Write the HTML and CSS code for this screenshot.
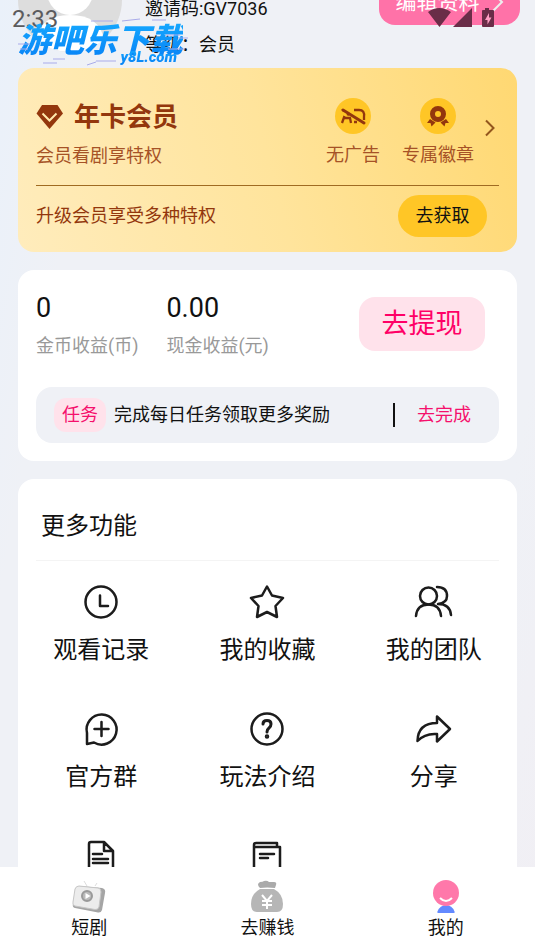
FILE: index.html
```html
<!DOCTYPE html>
<html lang="zh-CN">
<head>
<meta charset="utf-8">
<meta name="viewport" content="width=device-width, initial-scale=1">
<title>我的</title>
<link rel="stylesheet" href="styles.css">
</head>
<body>
<div class="status">
  <span>2:33</span>
  <svg class="status-icons" width="70" height="22" viewBox="0 0 70 22">
    <path d="M0 5Q11-3 23 5L11.500 20Z M25 20L44 1V20Z M57 1h4v2h4q1 0 1 1v15q0 1-1 1H55q-1 0-1-1V4q0-1 1-1h2Z"/>
    <path class="bolt" d="M61 6l-4 7h2.500v4.500l4-7H61Z"/>
  </svg>
</div>
<div class="watermark">
  <strong>游吧乐下载</strong>
  <em>y8L.com</em>
  <svg class="watermark-lines" width="175" height="56" viewBox="0 0 175 56">
    <path d="M73 1h22M104 1l18-2M0 24h12M2 29h8M148 15h14M160 18h10M150 29h17M35 39h12M25 43h14M78 41h20M69 45l9-3M134 0h14"/>
  </svg>
</div>
<main class="content">
  <header class="profile">
    <svg class="avatar" width="104" height="104" viewBox="0 0 104 104">
      <circle cx="52" cy="52" r="52" fill="#ddd"/>
      <circle cx="52" cy="44" r="23" fill="#fff"/>
      <path d="M18 92Q22 67 52 67T86 92Q70 104 52 104T18 92Z" fill="#fff"/>
    </svg>
    <div class="profile-info">
      <p>邀请码:GV7036</p>
      <p>等级：会员</p>
    </div>
    <button class="edit" type="button">编辑资料
      <svg width="12" height="20" viewBox="0 0 12 20"><path d="M1 1l9 9-9 9"/></svg>
    </button>
  </header>

  <section class="vip">
    <div class="vip-top">
      <div class="vip-name">
        <h1>
          <svg width="28" height="26" viewBox="0 0 28 26"><path d="M6 1h15.500L27 9.500 13.500 25 0.500 9.500Z" fill="#93370d"/><path d="M6.500 9.500L13.500 16.500 20.500 9.500" fill="none" stroke="#ffe9ad" stroke-width="2"/></svg>
          年卡会员
        </h1>
        <p>会员看剧享特权</p>
      </div>
      <div class="perk">
        <svg width="36" height="36" viewBox="0 0 36 36"><circle cx="18" cy="18" r="18" fill="#ffc626"/><g fill="none" stroke="#93370d" stroke-width="2.300"><path d="M7 25l2.500-7M9 20h6l1 5M19 12h5q6 0 5 7v3M19 24h3M12 16l2 1"/><path d="M8 12L29 25" stroke-width="3" stroke-linecap="round"/></g></svg>
        <span>无广告</span>
      </div>
      <div class="perk">
        <svg width="36" height="36" viewBox="0 0 36 36"><circle cx="18" cy="18" r="18" fill="#ffc626"/><path d="M10 21l-3 4 3.500 0 1 3.500 4-4ZM26 21l3 4-3.500 0-1 3.500-4-4Z" fill="#93370d"/><circle cx="18" cy="16" r="5.500" fill="none" stroke="#93370d" stroke-width="5"/></svg>
        <span>专属徽章</span>
      </div>
      <svg class="vip-arrow" width="10" height="18" viewBox="0 0 10 18"><path d="M1 1.500L8.500 9 1 16.500"/></svg>
    </div>
    <div class="vip-bottom">
      <span>升级会员享受多种特权</span>
      <button type="button">去获取</button>
    </div>
  </section>

  <section class="card income">
    <div class="income-row">
      <div><strong>0</strong><span>金币收益(币)</span></div>
      <div><strong>0.00</strong><span>现金收益(元)</span></div>
      <button type="button">去提现</button>
    </div>
    <div class="task">
      <span class="tag">任务</span>
      <span class="task-text">完成每日任务领取更多奖励</span>
      <a href="#task">去完成</a>
    </div>
  </section>

  <section class="card more">
    <h2>更多功能</h2>
    <div class="grid">
      <a href="#history"><svg width="36" height="36" viewBox="0 0 36 36"><circle cx="18" cy="18" r="15.500"/><path d="M17 11.500v10.500h8"/></svg><span>观看记录</span></a>
      <a href="#favorites"><svg width="36" height="36" viewBox="0 0 36 36"><path d="M18 2.500L23 11.500 34 14 26.500 22 28 33 18 28 8 33 9.500 22 2 14 13 11.500Z"/></svg><span>我的收藏</span></a>
      <a href="#team"><svg width="36" height="36" viewBox="0 0 36 36"><circle cx="12.500" cy="12" r="8.500"/><path d="M0 32Q1 20.500 12.500 20.500T25 32M21 3Q31 3 31 12 31 19 22 20 34 20 35 31"/></svg><span>我的团队</span></a>
      <a href="#group"><svg width="36" height="36" viewBox="0 0 36 36"><path d="M4 33V22A15 15 0 1 1 11 31.500ZM18.500 11v14M11.500 18h14"/></svg><span>官方群</span></a>
      <a href="#guide"><svg width="36" height="36" viewBox="0 0 36 36"><circle cx="18" cy="18" r="15.500"/><path d="M14 13Q14 9.500 18 9.500q4 0 4 3.500 0 2.500-2 4-2 1.500-2 4" stroke-width="3"/><circle cx="18" cy="25.500" r="1"/></svg><span>玩法介绍</span></a>
      <a href="#share"><svg width="36" height="36" viewBox="0 0 36 36"><path d="M21 5.500L34 18 21 30.500V23Q9 22 1.500 30 2 12 21 12Z"/></svg><span>分享</span></a>
      <a href="#document"><svg width="36" height="36" viewBox="0 0 36 36"><path d="M30 40V13L21 4H8Q6 4 6 6V40M21 4v9h9M10 16h9M10 21h15M10 25h15"/></svg></a>
      <a href="#notes"><svg width="36" height="36" viewBox="0 0 36 36"><path d="M5 40V7Q5 5 7 5H28v4H6M28 9h3V40M11 16h14M11 20h8"/></svg></a>
    </div>
  </section>
</main>

<nav class="tabs">
  <a href="#drama"><svg width="36" height="34" viewBox="0 0 36 34"><path d="M16 6l-3-5M24 6l2-3" stroke="#ddd" fill="none"/><path d="M9 6L31 8q4 1 3 5l-3 17q-1 3-4 2.500L4 28q-3-1-2-4L5 10q1-4 4-4Z" fill="#a5a5a5"/><path d="M8 6L27 8q3 0 3 4l-2 15q-1 3-4 2.500L4 26q-3-1-2-4L4 9q1-3 4-3Z" fill="#ececec" stroke="#c6c6c6"/><circle cx="16" cy="16" r="5" fill="#bbb" stroke="#999" stroke-width="2"/><path d="M14.500 13l5 3-5 3Z" fill="#fff"/></svg><span>短剧</span></a>
  <a href="#earn"><svg width="36" height="34" viewBox="0 0 36 34"><path d="M11 2q3 0 4-1 3-1 5 1l5 0q3 0 2 3l-1 3q-8-1-15 0-4-4 0-6Z" fill="#aaa"/><path d="M11 9h14q9 5 9 15 0 8-6 8H8q-6 0-6-8 0-10 9-15Z" fill="#b6b6b6"/><path d="M13 15l5 6 5-6M18 21v8M13 21h10M13 25h10" fill="none" stroke="#fff" stroke-width="2"/></svg><span>去赚钱</span></a>
  <a href="#mine"><svg width="36" height="34" viewBox="0 0 36 34"><path d="M10 33q-1 0-.500-1.500Q12 25 18 25t8.500 6.500Q27 33 26 33Z" fill="#6389ff"/><circle cx="18" cy="13" r="13" fill="#ff78aa"/><path d="M12 18q6 6 12 0" fill="none" stroke="#fff" stroke-width="2"/></svg><span>我的</span></a>
</nav>
</body>
</html>
```
FILE: styles.css
```css
* { box-sizing: border-box; }

body {
  margin: 0;
  height: 100vh;
  display: flex;
  flex-direction: column;
  overflow: hidden;
  background: linear-gradient(100deg, #eaf1fa 0, #eff1f6 15%, #eff1f6 85%, #f1eff4 100%);
  color: #111;
  font: 18px/24px Roboto, "Noto Sans CJK SC", sans-serif;
}

h1, h2, p { margin: 0; }
a { color: inherit; text-decoration: none; }
button { border: 0; padding: 0; color: inherit; font: inherit; cursor: pointer; }

/* Overlays */
.status {
  position: absolute;
  z-index: 2;
  top: 7px;
  left: 12px;
  right: 37px;
  display: flex;
  justify-content: space-between;
  color: #5b5b5d;
  font-size: 24px;
}
.status-icons { fill: #6a2d48; }
.status-icons .bolt { fill: #ff9fc4; }

.watermark {
  position: absolute;
  z-index: 3;
  top: 20px;
  left: 18px;
  width: 165px;
  font-style: italic;
  font-weight: 900;
}
.watermark strong,
.watermark em {
  display: block;
  background: linear-gradient(#16aaff, #077ff5);
  background-clip: text;
  color: transparent;
}
.watermark strong { font-size: 33px; line-height: 42px; font-weight: 900; white-space: nowrap; }
.watermark em { margin: -14px 6px 0 0; font-size: 15px; line-height: 18px; text-align: right; }
.watermark-lines {
  position: absolute;
  top: 0;
  left: 0;
  overflow: visible;
  fill: none;
  stroke: #a9abea;
  stroke-width: 1;
}

.content { flex: 1; min-height: 0; overflow: hidden; padding: 0 18px; }

/* Profile header, scrolled partly out of view */
.profile { display: flex; align-items: flex-end; height: 68px; }
.avatar { margin-bottom: 16px; flex: none; }
.profile-info { flex: 1; margin: 0 0 5px 23px; line-height: 36px; }
.edit {
  display: flex;
  align-items: center;
  justify-content: center;
  gap: 12px;
  width: 141px;
  height: 47px;
  margin: 0 -3px 43px 0;
  border-radius: 16px;
  background: #ff72a8;
  color: #fff;
  font-size: 21px;
}
.edit svg { fill: none; stroke: #eee; stroke-width: 2; }

/* Membership */
.vip {
  padding: 30px 18px 15px;
  border-radius: 16px;
  background: linear-gradient(75deg, #ffecbc, #ffe49c 50%, #ffd872);
  color: #93370d;
}
.vip-top {
  display: flex;
  gap: 22px;
  padding-bottom: 17px;
  border-bottom: 1px solid #a06b22;
}
.vip-name { flex: 1; }
.vip-name h1 {
  display: flex;
  align-items: center;
  gap: 10px;
  margin-bottom: 8px;
  font-size: 26px;
  line-height: 38px;
}
.vip-name p, .perk span { color: #a65226; }
.perk { display: flex; flex-direction: column; align-items: center; gap: 9px; }
.vip-arrow {
  margin: 21px 4px 0 -11px;
  fill: none;
  stroke: #93561d;
  stroke-width: 2;
}
.vip-bottom {
  display: flex;
  align-items: center;
  justify-content: space-between;
  padding: 9px 12px 0 0;
}
.vip-bottom button {
  width: 89px;
  height: 42px;
  border-radius: 21px;
  background: #ffc626;
  color: #111;
}

/* White cards */
.card { margin-top: 18px; border-radius: 16px; background: #fff; }

.income { padding: 20px 18px 18px; }
.income-row { display: flex; align-items: center; gap: 28px; }
.income-row strong { display: block; margin-bottom: 8px; font-size: 27px; line-height: 36px; font-weight: 400; }
.income-row span { color: #999; }
.income-row button {
  width: 126px;
  height: 54px;
  margin: 0 14px 0 auto;
  border-radius: 16px;
  background: #ffe2eb;
  color: #ff0066;
  font-size: 27px;
}
.task {
  display: flex;
  align-items: center;
  gap: 8px;
  min-height: 56px;
  margin-top: 29px;
  padding: 0 28px 0 18px;
  border-radius: 16px;
  background: #eff1f6;
}
.tag { padding: 5px 8px; border-radius: 12px; background: #ffe2eb; }
.tag, .task a { color: #f5106c; }
.task-text { flex: 1; }
.task a { padding-left: 22px; border-left: 2px solid #111; }

.more h2 {
  margin: 0 18px;
  padding: 31px 5px 18px;
  border-bottom: 1px solid #f4f4f4;
  font-size: 24px;
  line-height: 32px;
  font-weight: 400;
}
.grid { display: grid; grid-template-columns: repeat(3, 1fr); }
.grid a {
  display: flex;
  flex-direction: column;
  align-items: center;
  gap: 14px;
  padding: 23px 0 22px;
  font-size: 24px;
  line-height: 32px;
}
.grid svg {
  overflow: visible;
  fill: none;
  stroke: #1c1c1c;
  stroke-width: 7%;
  stroke-linecap: round;
  stroke-linejoin: round;
}

/* Bottom tabs */
.tabs {
  position: relative;
  display: grid;
  grid-template-columns: repeat(3, 1fr);
  padding: 13px 0 11px;
  background: #fff;
}
.tabs a { display: flex; flex-direction: column; align-items: center; gap: 2px; }
```
